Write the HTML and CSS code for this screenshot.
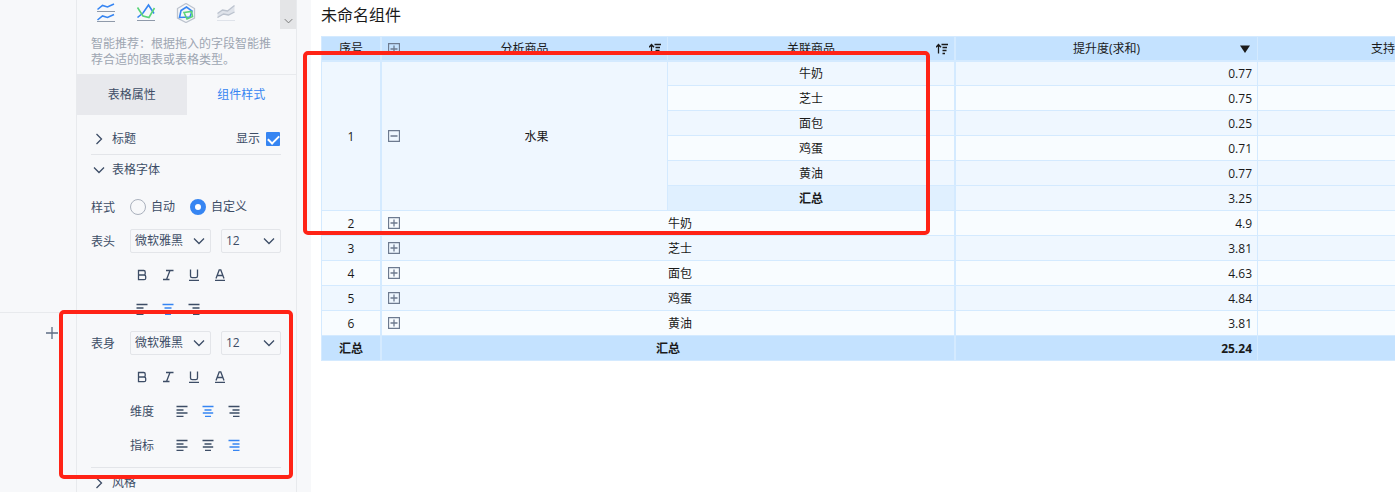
FILE: index.html
```html
<!DOCTYPE html>
<html lang="zh-CN">
<head>
    <meta charset="UTF-8">
    <meta name="viewport" content="width=device-width, initial-scale=1.0">
    <title>未命名组件</title>
    <link rel="stylesheet" href="styles.css">
</head>
<body>
    <!-- Shared icons -->
    <svg class="sprite" aria-hidden="true">
        <symbol id="chevron-down" viewBox="0 0 12 12"><path d="M1 3.5l5 5 5-5"/></symbol>
        <symbol id="chevron-right" viewBox="0 0 12 12"><path d="M3.5 1l5 5-5 5"/></symbol>
        <symbol id="bold" viewBox="0 0 12 12"><path d="M2.5 1.5h5.200a1.500 1.500 0 0 1 1.500 1.500v1.500a1.500 1.500 0 0 1-1.500 1.500H2.500h5.700a1.500 1.500 0 0 1 1.500 1.500v1.700a1.500 1.500 0 0 1-1.500 1.500H2.500z"/></symbol>
        <symbol id="italic" viewBox="0 0 12 12"><path d="M4 1.500h7.500M1 10.500h6.500M8 1.500L4.500 10.500"/></symbol>
        <symbol id="underline" viewBox="0 0 12 12"><path d="M2.500 .5v6.500a1.700 1.700 0 0 0 1.700 1.700h3.600a1.700 1.700 0 0 0 1.700-1.700V.5M1 11.500h10"/></symbol>
        <symbol id="color" viewBox="0 0 12 12"><path d="M2 9.5L5.200.9h1.600L10 9.500M3.300 6.500h5.400M1 11.500h10"/></symbol>
        <symbol id="align-left" viewBox="0 0 12 12"><path d="M.5 1.500h11M.5 5h7M.5 8h11M.5 11.300h7"/></symbol>
        <symbol id="align-center" viewBox="0 0 12 12"><path d="M.5 1.500h11M2.500 5h7M.8 8h10.400M3 11.300h6"/></symbol>
        <symbol id="align-right" viewBox="0 0 12 12"><path d="M.5 1.500h11M4.500 5h7M1.500 8h10M5 11.300h6.500"/></symbol>
        <symbol id="expand" viewBox="0 0 12 12"><path d="M.5.5h11v11H.5zM2.500 6h7M6 2.500v7"/></symbol>
        <symbol id="collapse" viewBox="0 0 12 12"><path d="M.5.5h11v11H.5zM2.500 6h7"/></symbol>
        <symbol id="sort" viewBox="0 0 12 12"><path d="M2.500 10.500V2M0 4.300L2.500 1.500 5 4.300M5.500 1.500H12M6.500 4.500H11M6.500 7.500h4M6.500 10.500h2.500"/></symbol>
    </svg>

    <div class="app">
        <aside class="fields">
            <button class="add-btn" aria-label="添加">
                <svg viewBox="0 0 12 12"><path d="M6 0v12M0 6h12"/></svg>
            </button>
        </aside>

        <section class="settings">
            <div class="recommend">
                <div class="chart-types">
                    <button class="chart-btn" aria-label="多系列折线图">
                        <svg viewBox="0 0 20 20">
                            <path class="blue" d="M1.500 6.500L6.500 2.500l5 1.500 6.500-3M1.500 17l5-4 5 1.500 6.500-3"/>
                            <path class="axis" d="M1 8.500h18M1 18.500h18"/>
                        </svg>
                    </button>
                    <button class="chart-btn" aria-label="折线图">
                        <svg viewBox="0 0 20 20">
                            <path class="blue" d="M1.500 14.500L7 10l5.500-8L18 10.500"/>
                            <path class="green" d="M1.500 4.500L7 13l6 1.500L18.500 5"/>
                            <path class="axis" d="M1 17.500h18"/>
                        </svg>
                    </button>
                    <button class="chart-btn" aria-label="雷达图">
                        <svg viewBox="0 0 20 20">
                            <path class="grey" d="M10 .5l8.500 5v9.500L10 19.500l-8.500-4.500V5.500z"/>
                            <path class="blue" d="M5 7.500L10.500 4l5.500 4-2 6-10.500.5z"/>
                            <path class="green" d="M8 9.500l7.500-1 1 5L11 16z"/>
                        </svg>
                    </button>
                    <button class="chart-btn" aria-label="面积图">
                        <svg viewBox="0 0 20 20">
                            <path class="area" d="M1.500 10.500l5-3.500 5 1 7-5.500v7l-6 3-5-1-6 3.500z"/>
                            <path class="grey" d="M1.500 10.500l5-3.500 5 1 7-5.500M1.500 14.500l6-3.500 5 1 6-3"/>
                            <path class="area" d="M1 17h18v1H1z"/>
                        </svg>
                    </button>
                    <button class="more-btn" aria-label="更多图表"><svg><use href="#chevron-down"/></svg></button>
                </div>
                <p class="hint">智能推荐：根据拖入的字段智能推荐合适的图表或表格类型。</p>
            </div>

            <div class="tabs" role="tablist">
                <button class="tab" role="tab">表格属性</button>
                <button class="tab active" role="tab" aria-selected="true">组件样式</button>
            </div>

            <div class="groups">
                <div class="group-head">
                    <button class="toggle"><svg><use href="#chevron-right"/></svg>标题</button>
                    <label class="show">显示<input type="checkbox" class="checkbox" checked></label>
                </div>
                <div class="group-head open">
                    <button class="toggle"><svg><use href="#chevron-down"/></svg>表格字体</button>
                </div>

                <div class="group-body">
                    <div class="row">
                        <span class="row-label">样式</span>
                        <label class="choice"><input type="radio" name="style" class="radio">自动</label>
                        <label class="choice"><input type="radio" name="style" class="radio" checked>自定义</label>
                    </div>

                    <div class="row">
                        <label class="row-label" for="head-font">表头</label>
                        <div class="select font">
                            <select id="head-font"><option>微软雅黑</option></select>
                            <svg><use href="#chevron-down"/></svg>
                        </div>
                        <div class="select size">
                            <select aria-label="表头字号"><option>12</option></select>
                            <svg><use href="#chevron-down"/></svg>
                        </div>
                    </div>
                    <div class="row tools">
                        <button class="tool" aria-label="加粗"><svg><use href="#bold"/></svg></button>
                        <button class="tool" aria-label="斜体"><svg><use href="#italic"/></svg></button>
                        <button class="tool" aria-label="下划线"><svg><use href="#underline"/></svg></button>
                        <button class="tool" aria-label="字体颜色"><svg><use href="#color"/></svg></button>
                    </div>
                    <div class="row tools">
                        <button class="tool" aria-label="左对齐"><svg><use href="#align-left"/></svg></button>
                        <button class="tool active" aria-label="居中"><svg><use href="#align-center"/></svg></button>
                        <button class="tool" aria-label="右对齐"><svg><use href="#align-right"/></svg></button>
                    </div>

                    <div class="row">
                        <label class="row-label" for="body-font">表身</label>
                        <div class="select font">
                            <select id="body-font"><option>微软雅黑</option></select>
                            <svg><use href="#chevron-down"/></svg>
                        </div>
                        <div class="select size">
                            <select aria-label="表身字号"><option>12</option></select>
                            <svg><use href="#chevron-down"/></svg>
                        </div>
                    </div>
                    <div class="row tools">
                        <button class="tool" aria-label="加粗"><svg><use href="#bold"/></svg></button>
                        <button class="tool" aria-label="斜体"><svg><use href="#italic"/></svg></button>
                        <button class="tool" aria-label="下划线"><svg><use href="#underline"/></svg></button>
                        <button class="tool" aria-label="字体颜色"><svg><use href="#color"/></svg></button>
                    </div>
                    <div class="row tools">
                        <span class="row-label">维度</span>
                        <button class="tool" aria-label="左对齐"><svg><use href="#align-left"/></svg></button>
                        <button class="tool active" aria-label="居中"><svg><use href="#align-center"/></svg></button>
                        <button class="tool" aria-label="右对齐"><svg><use href="#align-right"/></svg></button>
                    </div>
                    <div class="row tools">
                        <span class="row-label">指标</span>
                        <button class="tool" aria-label="左对齐"><svg><use href="#align-left"/></svg></button>
                        <button class="tool" aria-label="居中"><svg><use href="#align-center"/></svg></button>
                        <button class="tool active" aria-label="右对齐"><svg><use href="#align-right"/></svg></button>
                    </div>
                </div>

                <div class="group-head open">
                    <button class="toggle"><svg><use href="#chevron-right"/></svg>风格</button>
                </div>
            </div>
        </section>

        <main class="preview">
            <h1 class="title">未命名组件</h1>
            <table class="data">
                <colgroup>
                    <col class="col-index"><col class="col-item"><col class="col-related"><col class="col-value"><col class="col-support">
                </colgroup>
                <thead>
                    <tr>
                        <th class="index">序号</th>
                        <th>
                            <div class="cell">
                                <button class="icon-btn" aria-label="全部展开"><svg><use href="#expand"/></svg></button>
                                <span>分析商品</span>
                                <button class="icon-btn sort" aria-label="排序"><svg><use href="#sort"/></svg></button>
                            </div>
                        </th>
                        <th class="last-dim">
                            <div class="cell sortable">
                                <span>关联商品</span>
                                <button class="icon-btn sort" aria-label="排序"><svg><use href="#sort"/></svg></button>
                            </div>
                        </th>
                        <th>
                            <div class="cell sortable">
                                <span>提升度(求和)</span>
                                <button class="icon-btn desc" aria-label="降序"><svg viewBox="0 0 12 12"><path d="M1 2.500h10L6 10z"/></svg></button>
                            </div>
                        </th>
                        <th>支持度(求和)</th>
                    </tr>
                </thead>
                <tbody>
                    <tr class="odd first">
                        <td class="index" rowspan="6">1</td>
                        <td rowspan="6">
                            <div class="cell">
                                <button class="icon-btn" aria-label="收起"><svg><use href="#collapse"/></svg></button>
                                <span>水果</span>
                            </div>
                        </td>
                        <td class="last-dim">牛奶</td><td class="num">0.77</td><td></td>
                    </tr>
                    <tr><td class="last-dim">芝士</td><td class="num">0.75</td><td></td></tr>
                    <tr class="odd"><td class="last-dim">面包</td><td class="num">0.25</td><td></td></tr>
                    <tr><td class="last-dim">鸡蛋</td><td class="num">0.71</td><td></td></tr>
                    <tr class="odd"><td class="last-dim">黄油</td><td class="num">0.77</td><td></td></tr>
                    <tr class="odd"><td class="last-dim subtotal">汇总</td><td class="num">3.25</td><td></td></tr>
                    <tr>
                        <td class="index">2</td>
                        <td class="last-dim" colspan="2"><div class="cell"><button class="icon-btn" aria-label="展开"><svg><use href="#expand"/></svg></button><span>牛奶</span></div></td>
                        <td class="num">4.9</td><td></td>
                    </tr>
                    <tr class="odd">
                        <td class="index">3</td>
                        <td class="last-dim" colspan="2"><div class="cell"><button class="icon-btn" aria-label="展开"><svg><use href="#expand"/></svg></button><span>芝士</span></div></td>
                        <td class="num">3.81</td><td></td>
                    </tr>
                    <tr>
                        <td class="index">4</td>
                        <td class="last-dim" colspan="2"><div class="cell"><button class="icon-btn" aria-label="展开"><svg><use href="#expand"/></svg></button><span>面包</span></div></td>
                        <td class="num">4.63</td><td></td>
                    </tr>
                    <tr class="odd">
                        <td class="index">5</td>
                        <td class="last-dim" colspan="2"><div class="cell"><button class="icon-btn" aria-label="展开"><svg><use href="#expand"/></svg></button><span>鸡蛋</span></div></td>
                        <td class="num">4.84</td><td></td>
                    </tr>
                    <tr>
                        <td class="index">6</td>
                        <td class="last-dim" colspan="2"><div class="cell"><button class="icon-btn" aria-label="展开"><svg><use href="#expand"/></svg></button><span>黄油</span></div></td>
                        <td class="num">3.81</td><td></td>
                    </tr>
                </tbody>
                <tfoot>
                    <tr>
                        <td class="index">汇总</td>
                        <td class="last-dim" colspan="2">汇总</td>
                        <td class="num">25.24</td><td></td>
                    </tr>
                </tfoot>
            </table>
        </main>

        <!-- Red highlight frames -->
        <div class="mark mark-table"></div>
        <div class="mark mark-settings"></div>
    </div>
</body>
</html>
```

FILE: styles.css
```css
* {
    box-sizing: border-box;
}
body {
    margin: 0;
    font-family: "Open Sans", "Noto Sans CJK SC", sans-serif;
    font-size: 12px;
    line-height: 16px;
    color: #3d4d66;
    background-color: #f7f8fa;
}
button, select, input {
    font: inherit;
    color: inherit;
    margin: 0;
}
button {
    padding: 0;
    border: none;
    background: none;
    cursor: pointer;
}
svg {
    display: block;
    width: 12px;
    height: 12px;
    fill: none;
    stroke: currentColor;
    stroke-width: 1.3;
}
.sprite {
    display: none;
}
.app {
    position: relative;
    display: flex;
    height: 100vh;
    overflow: hidden;
}

/* Left strip */
.fields {
    flex: none;
    width: 76px;
    padding-top: 312px;
}
.add-btn {
    display: flex;
    justify-content: flex-end;
    width: 100%;
    padding: 14px 18px;
    border-top: 1px solid #e8eaed;
    color: #5d6c84;
}

/* Settings panel */
.settings {
    flex: none;
    width: 221px;
    border-left: 1px solid #e8eaed;
    border-right: 1px solid #e8eaed;
}
.recommend {
    height: 75px;
    border-bottom: 1px solid #e8eaed;
}
.chart-types {
    display: flex;
    gap: 20px;
    height: 36px;
    padding-left: 19px;
}
.chart-btn {
    display: flex;
    align-items: flex-start;
    padding-top: 3px;
}
.chart-btn svg {
    width: 20px;
    height: 20px;
}
.blue {
    stroke: #3685f2;
    stroke-width: 1.6;
}
.green {
    stroke: #5ad477;
    stroke-width: 1.6;
}
.axis {
    stroke: #8f9aaa;
    stroke-width: 1;
}
.grey {
    stroke: #bcc3ce;
}
.area {
    fill: #dfe3ea;
    stroke: none;
}
.more-btn {
    display: flex;
    align-items: flex-end;
    justify-content: center;
    width: 16px;
    height: 29px;
    margin-left: auto;
    padding-bottom: 2px;
    background-color: #e4e5e7;
    color: #777;
}
.more-btn svg {
    width: 9px;
}
.hint {
    margin: 0;
    padding: 0 24px 0 14px;
    color: #9ea6b2;
}
.tabs {
    display: flex;
    height: 40px;
}
.tab {
    flex: 1;
    background-color: #e8e9ed;
}
.tab.active {
    background-color: transparent;
    color: #3685f2;
}
.groups {
    padding: 9px 15px 0 14px;
}
.group-head {
    display: flex;
    align-items: center;
    justify-content: space-between;
    height: 30px;
}
.group-head.open {
    height: 31px;
    border-top: 1px solid #e3e5e9;
}
.toggle {
    display: flex;
    align-items: center;
    gap: 7px;
    padding-left: 2px;
}
.show {
    display: flex;
    align-items: center;
    gap: 6px;
    padding-right: 1px;
}
.checkbox {
    appearance: none;
    display: grid;
    place-items: center;
    width: 14px;
    height: 14px;
    border-radius: 1px;
    background-color: #3685f2;
}
.checkbox::before {
    content: "";
    width: 9px;
    height: 5px;
    border: solid #fff;
    border-width: 0 0 2px 2px;
    transform: translateY(-1px) rotate(-45deg);
}
.group-body {
    padding: 5px 0;
}
.row {
    display: flex;
    align-items: center;
    height: 34px;
}
.row-label {
    width: 39px;
    padding-top: 2px;
}
.choice {
    display: flex;
    align-items: center;
    gap: 5px;
    margin-right: 15px;
}
.radio {
    appearance: none;
    width: 16px;
    height: 16px;
    border: 1px solid #aab1bd;
    border-radius: 50%;
}
.radio:checked {
    border: 5px solid #3685f2;
    background-color: #fff;
}
.select {
    display: grid;
    align-items: center;
    height: 24px;
    border: 1px solid #e3e5e9;
    border-radius: 2px;
}
.select.font {
    width: 81px;
    margin-right: 10px;
}
.select.size {
    width: 60px;
}
.select select {
    grid-area: 1 / 1;
    appearance: none;
    width: 100%;
    height: 22px;
    padding: 0 4px;
    border: none;
    background: none;
}
.select svg {
    grid-area: 1 / 1;
    justify-self: end;
    margin-right: 5px;
    pointer-events: none;
}
.tools {
    gap: 14px;
    padding-left: 45px;
}
.tools:has(.row-label) {
    padding-left: 39px;
}
.tools .row-label {
    width: 32px;
}
.tool.active {
    color: #3685f2;
}

/* Preview */
.preview {
    flex: 1;
    min-width: 0;
    margin-left: 14px;
    padding: 3px 0 0 10px;
    overflow: hidden;
    background-color: #fff;
    color: #1a1a1a;
}
.title {
    margin: 0 0 9px;
    font-size: 16px;
    font-weight: normal;
    line-height: 24px;
}
.data {
    table-layout: fixed;
    width: 1231px;
    border-collapse: separate;
    border-spacing: 0;
    text-align: center;
}
.col-index {
    width: 61px;
}
.col-item {
    width: 286px;
}
.col-related {
    width: 288px;
}
.col-value {
    width: 302px;
}
.col-support {
    width: 294px;
}
th, td {
    height: 25px;
    padding: 0;
    border: solid #d4eaff;
    border-width: 0 1px 1px 0;
    background-color: #f8fcff;
}
td {
    padding-top: 2px;
}
th {
    height: 26px;
    border-top-width: 1px;
    border-bottom-width: 2px;
    background-color: #c4e2ff;
    font-weight: normal;
}
.index {
    border-left-width: 1px;
    border-right-width: 2px;
}
.last-dim {
    border-right-width: 2px;
}
.odd td {
    background-color: #eff7ff;
}
.first td:not([rowspan]) {
    height: 24px;
    padding-top: 1px;
}
.odd .subtotal {
    background-color: #e0f0ff;
    font-weight: bold;
}
.num {
    padding-right: 5px;
    text-align: right;
}
tfoot td {
    background-color: #c4e2ff;
    font-weight: bold;
}
.cell {
    display: flex;
    align-items: center;
}
.cell span {
    flex: 1;
}
.cell.sortable {
    padding-left: 24px;
}
.icon-btn {
    display: flex;
    justify-content: center;
    width: 24px;
    color: #6d7a8f;
}
td .icon-btn {
    padding-bottom: 2px;
}
.icon-btn.sort, .icon-btn.desc {
    color: #1a1a1a;
}
.desc svg {
    fill: currentColor;
    stroke: none;
}

.mark {
    position: absolute;
    border: 4px solid #ff2316;
    border-radius: 5px;
    pointer-events: none;
}
.mark-table {
    left: 303px;
    top: 51px;
    width: 627px;
    height: 184px;
}
.mark-settings {
    left: 59px;
    top: 310px;
    width: 234px;
    height: 169px;
}
```
